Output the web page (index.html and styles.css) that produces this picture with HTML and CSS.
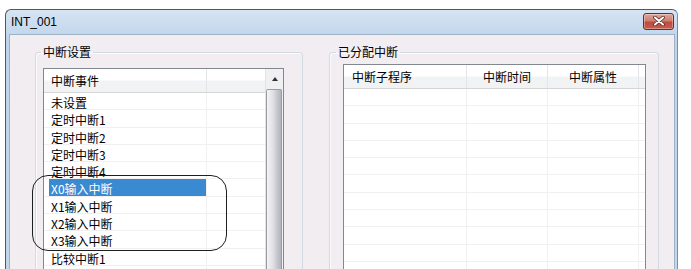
FILE: index.html
```html
<!DOCTYPE html>
<html lang="zh-CN">

<head>
    <meta charset="UTF-8">
    <title>INT_001</title>
    <link rel="stylesheet" href="styles.css">
</head>

<body>

    <div class="window">
        <div class="titlebar">
            <span class="title">INT_001</span>
            <div class="close-btn">
                <svg width="14" height="10" viewBox="0 0 14 10">
                    <path d="M3 1.5 L11 8.5 M11 1.5 L3 8.5" stroke="#5a2a24" stroke-width="3.6" stroke-linecap="round" />
                    <path d="M3 1.5 L11 8.5 M11 1.5 L3 8.5" stroke="#ffffff" stroke-width="2" stroke-linecap="round" />
                </svg>
            </div>
        </div>

        <div class="client">
            <!-- 中断设置 -->
            <fieldset class="group group-left">
                <legend>中断设置</legend>
                <div class="listview events">
                    <div class="list-body">
                        <div class="lv-header">
                            <div class="lv-col c-name">中断事件</div>
                            <div class="lv-col c-rest"></div>
                        </div>
                        <div class="lv-row"><div class="cell c-name"><span>未设置</span></div><div class="cell c-rest"></div></div>
                        <div class="lv-row"><div class="cell c-name"><span>定时中断1</span></div><div class="cell c-rest"></div></div>
                        <div class="lv-row"><div class="cell c-name"><span>定时中断2</span></div><div class="cell c-rest"></div></div>
                        <div class="lv-row"><div class="cell c-name"><span>定时中断3</span></div><div class="cell c-rest"></div></div>
                        <div class="lv-row"><div class="cell c-name"><span>定时中断4</span></div><div class="cell c-rest"></div></div>
                        <div class="lv-row selected"><div class="cell c-name"><span>X0输入中断</span></div><div class="cell c-rest"></div></div>
                        <div class="lv-row"><div class="cell c-name"><span>X1输入中断</span></div><div class="cell c-rest"></div></div>
                        <div class="lv-row"><div class="cell c-name"><span>X2输入中断</span></div><div class="cell c-rest"></div></div>
                        <div class="lv-row"><div class="cell c-name"><span>X3输入中断</span></div><div class="cell c-rest"></div></div>
                        <div class="lv-row"><div class="cell c-name"><span>比较中断1</span></div><div class="cell c-rest"></div></div>
                        <div class="lv-row"><div class="cell c-name"><span></span></div><div class="cell c-rest"></div></div>
                    </div>
                    <div class="scrollbar">
                        <div class="scroll-up"><span class="arrow"></span></div>
                        <div class="scroll-thumb"></div>
                    </div>
                </div>
            </fieldset>

            <!-- 已分配中断 -->
            <fieldset class="group group-right">
                <legend>已分配中断</legend>
                <div class="listview assigned">
                    <div class="lv-header">
                        <div class="lv-col a-sub">中断子程序</div>
                        <div class="lv-col a-time">中断时间</div>
                        <div class="lv-col a-attr">中断属性</div>
                        <div class="lv-col a-end"></div>
                    </div>
                    <div class="lv-row"><div class="cell a-sub"></div><div class="cell a-time"></div><div class="cell a-attr"></div><div class="cell a-end"></div></div>
                    <div class="lv-row"><div class="cell a-sub"></div><div class="cell a-time"></div><div class="cell a-attr"></div><div class="cell a-end"></div></div>
                    <div class="lv-row"><div class="cell a-sub"></div><div class="cell a-time"></div><div class="cell a-attr"></div><div class="cell a-end"></div></div>
                    <div class="lv-row"><div class="cell a-sub"></div><div class="cell a-time"></div><div class="cell a-attr"></div><div class="cell a-end"></div></div>
                    <div class="lv-row"><div class="cell a-sub"></div><div class="cell a-time"></div><div class="cell a-attr"></div><div class="cell a-end"></div></div>
                    <div class="lv-row"><div class="cell a-sub"></div><div class="cell a-time"></div><div class="cell a-attr"></div><div class="cell a-end"></div></div>
                    <div class="lv-row"><div class="cell a-sub"></div><div class="cell a-time"></div><div class="cell a-attr"></div><div class="cell a-end"></div></div>
                    <div class="lv-row"><div class="cell a-sub"></div><div class="cell a-time"></div><div class="cell a-attr"></div><div class="cell a-end"></div></div>
                    <div class="lv-row"><div class="cell a-sub"></div><div class="cell a-time"></div><div class="cell a-attr"></div><div class="cell a-end"></div></div>
                    <div class="lv-row"><div class="cell a-sub"></div><div class="cell a-time"></div><div class="cell a-attr"></div><div class="cell a-end"></div></div>
                    <div class="lv-row"><div class="cell a-sub"></div><div class="cell a-time"></div><div class="cell a-attr"></div><div class="cell a-end"></div></div>
                </div>
            </fieldset>
        </div>
    </div>

    <!-- 标注圈 -->
    <div class="mark"></div>

</body>

</html>
```

FILE: styles.css
```css
body {
    margin: 0;
    padding: 9px 0 0 5px;
    height: 269px;
    box-sizing: border-box;
    overflow: hidden;
    background-color: #ffffff;
    font-family: "Noto Sans CJK SC", "Liberation Sans", sans-serif;
    font-size: 12px;
    color: #000;
    position: relative;
}

/* 窗口外框 */
.window {
    width: 673px;
    height: 300px;
    box-sizing: border-box;
    border: 1px solid #4c5866;
    border-right: 1px solid #3ea3dc;
    border-bottom: none;
    border-radius: 6px 6px 0 0;
    background: linear-gradient(to bottom, #d6e4f3, #bfd4ea 30px, #c3d7eb);
    padding: 0 2px 0 3px;
}

.titlebar {
    height: 24px;
    display: flex;
    align-items: center;
    justify-content: space-between;
    padding: 0 1px 0 2px;
}

.title {
    font-family: "Liberation Sans", sans-serif;
    font-size: 12px;
    color: #000;
}

.close-btn {
    width: 31px;
    height: 17px;
    box-sizing: border-box;
    margin-top: -2px;
    border: 1px solid #6e2b24;
    border-radius: 3px;
    background: linear-gradient(to bottom, #e2a69c, #cf7d72 45%, #bf4b3d 55%, #c65c4e);
    display: flex;
    align-items: center;
    justify-content: center;
    box-shadow: inset 0 0 0 1px rgba(255, 255, 255, 0.35);
}

.client {
    height: 100%;
    box-sizing: border-box;
    background-color: #f1edf1;
    border: 1px solid #9fb3c8;
    border-bottom: none;
    padding: 9px 0 0 25px;
    display: flex;
    align-items: flex-start;
    gap: 26px;
}

/* 分组框 */
.group {
    margin: 0;
    border: 1px solid #d3dbe2;
    border-radius: 3px;
    box-shadow: inset 1px 1px 0 #fbfafc;
    height: 260px;
    box-sizing: border-box;
}

.group legend {
    padding: 0 2px;
    margin-left: -2px;
    line-height: 16px;
    font-size: 12px;
}

.group-left {
    width: 268px;
    padding: 8px 0 0 7px;
}

.group-right {
    width: 330px;
    padding: 4px 0 0 8px;
}

/* 列表 */
.listview {
    background-color: #ffffff;
    border: 1px solid #828790;
    border-bottom: none;
    height: 240px;
    box-sizing: border-box;
}

.events {
    width: 241px;
    display: flex;
}

.events .list-body {
    width: 221px;
    overflow: hidden;
}

.assigned {
    width: 303px;
    margin-left: 5px;
    overflow: hidden;
}

.lv-header {
    display: flex;
    height: 24px;
    box-sizing: border-box;
    background: linear-gradient(to bottom, #ffffff 0, #ffffff 11px, #f2f3f5 12px, #f1f2f4);
    border-bottom: 1px solid #d5d5d5;
}

.lv-col {
    height: 100%;
    display: flex;
    align-items: center;
    box-sizing: border-box;
    border-right: 1px solid #e2e5e9;
}

.lv-row {
    display: flex;
    height: 17.3px;
    box-sizing: border-box;
    border-bottom: 1px solid #f0f0f0;
}

.cell {
    height: 100%;
    box-sizing: border-box;
    border-right: 1px solid #f0f0f0;
}

.c-name {
    width: 163px;
    padding-left: 5px;
}

.lv-col.c-name {
    padding-left: 7px;
}

.c-rest {
    flex: 1;
    border-right: none;
}

.c-name span {
    display: block;
    height: 100%;
    padding-left: 2px;
    line-height: 19px;
    white-space: nowrap;
}

.lv-row.selected .c-name span {
    background-color: #3a8ad2;
    color: #ffffff;
}

.a-sub {
    width: 123px;
    padding-left: 8px;
}

.a-time {
    width: 81px;
    justify-content: center;
}

.a-attr {
    width: 91px;
    justify-content: center;
}

.a-end {
    flex: 1;
    border-right: none;
}

/* 滚动条 */
.scrollbar {
    width: 18px;
    background-color: #f0f0f2;
    border-left: 1px solid #e3e3e6;
    box-sizing: border-box;
    display: flex;
    flex-direction: column;
}

.scroll-up {
    height: 20px;
    display: flex;
    align-items: center;
    justify-content: center;
}

.arrow {
    width: 0;
    height: 0;
    border-left: 3.5px solid transparent;
    border-right: 3.5px solid transparent;
    border-bottom: 4px solid #303030;
}

.scroll-thumb {
    flex: 1;
    margin: 0 1px 0 0;
    border: 1px solid #9a9ca4;
    border-bottom: none;
    border-radius: 2px 2px 0 0;
    background: linear-gradient(to right, #f4f4f6, #e2e2e6 40%, #c4c5cc 75%, #b3b4bc);
}

/* 手画的标注圈 */
.mark {
    position: absolute;
    left: 32px;
    top: 175px;
    width: 195px;
    height: 76px;
    box-sizing: border-box;
    border: 1.4px solid #1e1e1e;
    border-radius: 16px;
}
```
